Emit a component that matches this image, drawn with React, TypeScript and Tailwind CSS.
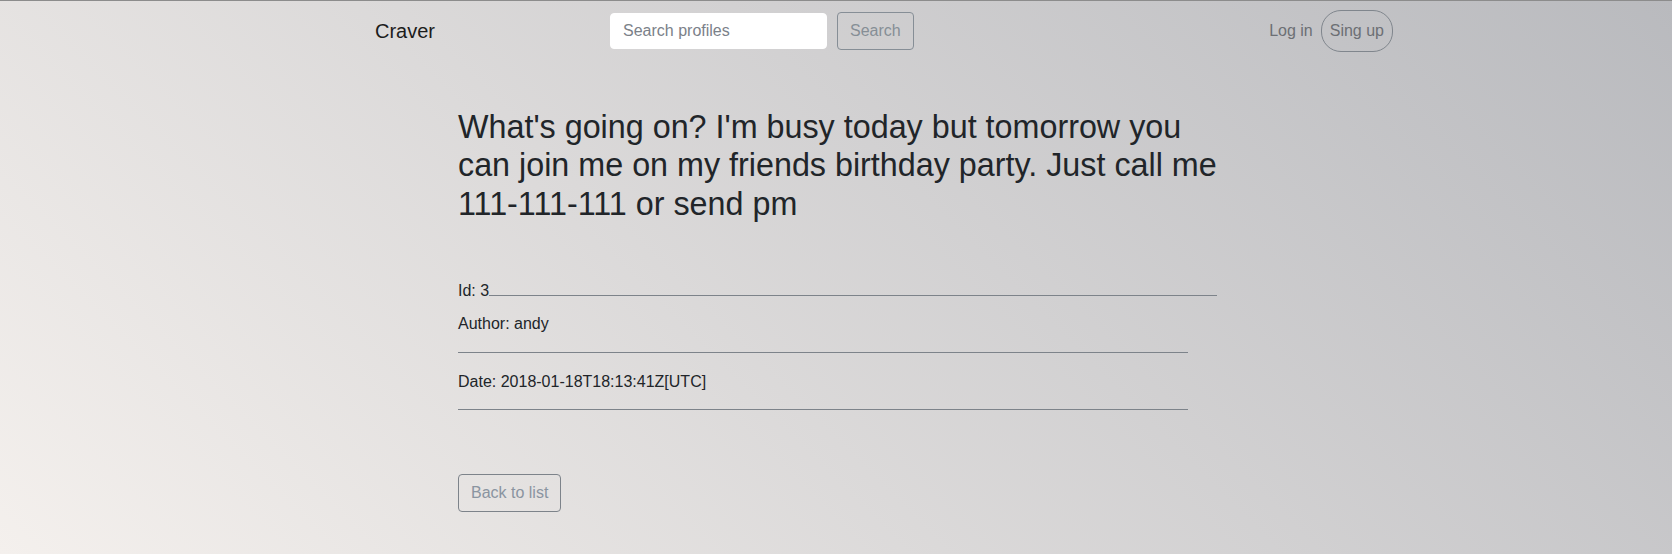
export default function App() {
  return (
    <div
      className="h-[554px] w-full overflow-hidden border-t border-[#8c8c8c] bg-[linear-gradient(45deg,#f4f0ed,#b9babe)] text-[#212529]"
      style={{ fontFamily: '"Liberation Sans", Arial, sans-serif' }}
    >
      <nav className="flex h-[60px] items-center pl-[375px] pr-[279px]">
        <a className="text-[20px] leading-[30px] text-[#1c1c1c]">Craver</a>
        <form className="ml-[175px] flex items-center gap-[10px]">
          <input
            type="text"
            placeholder="Search profiles"
            className="h-[36px] w-[217px] rounded-[4px] border border-white bg-white px-[12px] text-[16px] text-[#495057] placeholder:text-[#7b8189] focus:outline-none"
          />
          <button
            type="button"
            className="h-[38px] rounded-[4px] border border-[#868e96] px-[12px] text-[16px] leading-[24px] text-[#868e96]"
          >
            Search
          </button>
        </form>
        <div className="ml-auto flex items-center gap-[8px]">
          <a className="text-[16px] leading-[24px] text-[#6c6f74]">Log in</a>
          <button
            type="button"
            className="h-[42px] rounded-[20px] border border-[#80868d] px-[8px] text-[16px] leading-[24px] text-[#6c6f74]"
          >
            Sing up
          </button>
        </div>
      </nav>

      <main className="pl-[458px]">
        <div className="w-[766px]">
          <h2 className="mt-[47px] text-[32.3px] leading-[38.4px] font-normal">
            What's going on? I'm busy today but tomorrow you can join me on my friends birthday party. Just call me 111-111-111 or send pm
          </h2>

          <div className="mt-[56px] flex w-[759px] items-start text-[16px] leading-[24px]">
            <span>Id: 3</span>
            <div className="mt-[16px] h-px flex-1 bg-[#7d838a]" />
          </div>
          <p className="mt-[9px] text-[16px] leading-[24px]">Author: andy</p>
          <hr className="mt-[16px] w-[730px] border-0 border-t border-[#7d838a]" />
          <p className="mt-[17px] text-[16px] leading-[24px]">Date: 2018-01-18T18:13:41Z[UTC]</p>
          <hr className="mt-[15px] w-[730px] border-0 border-t border-[#7d838a]" />

          <button
            type="button"
            className="mt-[64px] h-[38px] rounded-[4px] border border-[#7d838a] px-[12px] text-[16px] leading-[24px] text-[#8a94a0]"
          >
            Back to list
          </button>
        </div>
      </main>
    </div>
  );
}
